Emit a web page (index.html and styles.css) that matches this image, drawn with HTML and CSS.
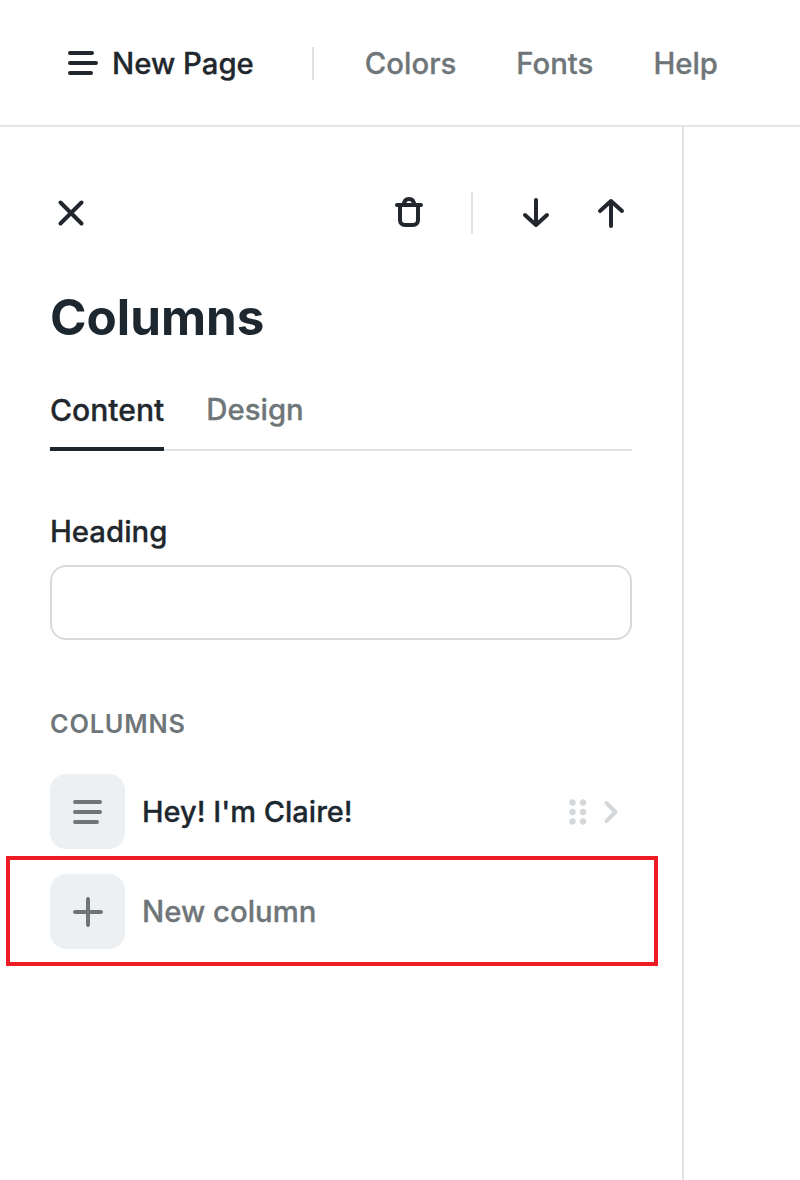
FILE: index.html
```html
<!DOCTYPE html>
<html lang="en">
<head>
    <meta charset="UTF-8">
    <meta name="viewport" content="width=device-width, initial-scale=1.0">
    <title>Columns</title>
    <link rel="stylesheet" href="styles.css">
</head>
<body>
<header class="topbar">
    <div class="page-title">
        <svg class="icon-menu" width="30" height="26" viewBox="0 0 30 26" fill="none" stroke="#21272c" stroke-width="4" stroke-linecap="round"><path d="M2 3H24M2 13H28M2 23H23"/></svg>
        <span>New Page</span>
    </div>
    <div class="topbar-sep"></div>
    <nav class="topnav">
        <a>Colors</a>
        <a>Fonts</a>
        <a>Help</a>
    </nav>
</header>

<aside class="panel">
    <div class="toolbar">
        <svg width="28" height="28" viewBox="0 0 28 28" fill="none" stroke="#21272c" stroke-width="4" stroke-linecap="round"><path d="M3.500 3.500L24.500 24.500M24.500 3.500L3.500 24.500"/></svg>
        <div class="toolbar-right">
            <svg class="icon-trash" width="28" height="32" viewBox="0 0 28 32" fill="none" stroke="#21272c" stroke-width="4" stroke-linecap="round" stroke-linejoin="round"><path d="M2 8H26M5 8V23C5 26 7 28 10 28H18C21 28 23 26 23 23V8M9 8C9 4 11 2 14 2C17 2 19 4 19 8"/></svg>
            <div class="toolbar-sep"></div>
            <svg class="icon-down" width="28" height="32" viewBox="0 0 28 32" fill="none" stroke="#21272c" stroke-width="4" stroke-linecap="round" stroke-linejoin="round"><path d="M14 3V28M3 18L14 28L25 18"/></svg>
            <svg class="icon-up" width="28" height="32" viewBox="0 0 28 32" fill="none" stroke="#21272c" stroke-width="4" stroke-linecap="round" stroke-linejoin="round"><path d="M14 29V4M3 14L14 4L25 14"/></svg>
        </div>
    </div>

    <h1>Columns</h1>

    <div class="tabs">
        <div class="tab active">Content</div>
        <div class="tab">Design</div>
    </div>

    <label class="field-label" for="heading">Heading</label>
    <input class="field" id="heading" type="text">

    <div class="section-title">COLUMNS</div>

    <div class="rows">
        <div class="row">
            <div class="row-icon">
                <svg width="30" height="26" viewBox="0 0 30 26" fill="none" stroke="#6f7679" stroke-width="4" stroke-linecap="round"><path d="M2 3H27M2 13H27M2 23H24"/></svg>
            </div>
            <span class="row-name">Hey! I'm Claire!</span>
            <div class="row-actions">
                <svg width="18" height="26" viewBox="0 0 18 26" fill="#d5d8da"><circle cx="3.500" cy="3.500" r="3.200"/><circle cx="14" cy="3.500" r="3.200"/><circle cx="3.500" cy="13" r="3.200"/><circle cx="14" cy="13" r="3.200"/><circle cx="3.500" cy="22.500" r="3.200"/><circle cx="14" cy="22.500" r="3.200"/></svg>
                <svg width="16" height="24" viewBox="0 0 16 24" fill="none" stroke="#d5d8da" stroke-width="4" stroke-linecap="round" stroke-linejoin="round"><path d="M3.500 3L12.500 12L3.500 21"/></svg>
            </div>
        </div>
        <div class="row">
            <div class="row-icon">
                <svg width="30" height="30" viewBox="0 0 30 30" fill="none" stroke="#6f7679" stroke-width="4" stroke-linecap="round"><path d="M15 2V28M2 15H28"/></svg>
            </div>
            <span class="row-name muted">New column</span>
            <div class="highlight"></div>
        </div>
    </div>
</aside>
</body>
</html>
```

FILE: styles.css
```css
:root {
    --color-text: #1c2730;
    --color-muted: #6f7679;
    --color-border: #dfe3e8;
    --color-icon-bg: #edf0f3;
}

body {
    margin: 0;
    background-color: #fff;
    color: var(--color-text);
    font-family: Inter, "Liberation Sans", sans-serif;
    height: 1180px;
    overflow: hidden;
}

/* Top bar */
.topbar {
    display: flex;
    align-items: center;
    height: 124px;
    padding: 1px 0 0 68px;
    border-bottom: 2px solid #e3e5e7;
}

.page-title {
    display: flex;
    align-items: center;
    gap: 14px;
    font-size: 29.33px;
    font-weight: 500;
    -webkit-text-stroke: 0.3px;
    color: #21272c;
}

.topbar-sep {
    width: 2px;
    height: 33px;
    margin: 0 51px 0 58px;
    background-color: #dfe1e3;
}

.topnav {
    display: flex;
    gap: 60px;
    font-size: 29.33px;
    font-weight: 500;
    -webkit-text-stroke: 0.3px;
    color: var(--color-muted);
}

/* Side panel */
.panel {
    width: 582px;
    height: 1053px;
    padding: 0 50px;
    border-right: 2px solid var(--color-border);
}

.toolbar {
    display: flex;
    align-items: center;
    justify-content: space-between;
    height: 42px;
    padding: 65px 7px 0 7px;
}

.toolbar-right {
    display: flex;
    align-items: center;
}

.toolbar-sep {
    width: 2px;
    height: 42px;
    margin: 0 49px 0 48px;
    background-color: var(--color-border);
}

.icon-up {
    margin-left: 47px;
}

h1 {
    margin: 53px 0 0;
    font-size: 49.4px;
    line-height: 60px;
    font-weight: 700;
}

.tabs {
    display: flex;
    gap: 42px;
    margin-top: 46px;
    border-bottom: 2px solid var(--color-border);
}

.tab {
    padding-bottom: 22px;
    margin-bottom: -2px;
    font-size: 29.33px;
    line-height: 34px;
    font-weight: 500;
    -webkit-text-stroke: 0.3px;
    color: var(--color-muted);
}

.tab.active {
    color: #21272c;
    border-bottom: 4px solid var(--color-text);
    padding-bottom: 20px;
    font-size: 30.1px;
}

.field-label {
    display: block;
    margin-top: 64px;
    font-size: 29.33px;
    line-height: 34px;
    font-weight: 500;
    -webkit-text-stroke: 0.3px;
    color: #21272c;
}

.field {
    display: block;
    width: 100%;
    height: 75px;
    margin-top: 16px;
    box-sizing: border-box;
    border: 2px solid #d8dbde;
    border-radius: 16px;
    background-color: #fff;
}

.section-title {
    margin-top: 69px;
    font-size: 25.33px;
    line-height: 30px;
    font-weight: 600;
    letter-spacing: 0.8px;
    color: var(--color-muted);
}

.rows {
    display: flex;
    flex-direction: column;
    gap: 25px;
    margin-top: 35px;
}

.row {
    position: relative;
    display: flex;
    align-items: center;
    gap: 17px;
    height: 75px;
}

.row-icon {
    display: flex;
    align-items: center;
    justify-content: center;
    width: 75px;
    height: 75px;
    border-radius: 16px;
    background-color: var(--color-icon-bg);
}

.row-name {
    font-size: 29px;
    font-weight: 500;
    -webkit-text-stroke: 0.3px;
}

.row-name.muted {
    font-size: 29.33px;
    color: var(--color-muted);
}

.row-actions {
    display: flex;
    align-items: center;
    gap: 16px;
    margin-left: auto;
    padding-right: 13px;
}

/* Red annotation box over the "New column" row */
.highlight {
    position: absolute;
    left: -44px;
    top: -18px;
    width: 652px;
    height: 110px;
    box-sizing: border-box;
    border: 4px solid #ed1c24;
}
```
